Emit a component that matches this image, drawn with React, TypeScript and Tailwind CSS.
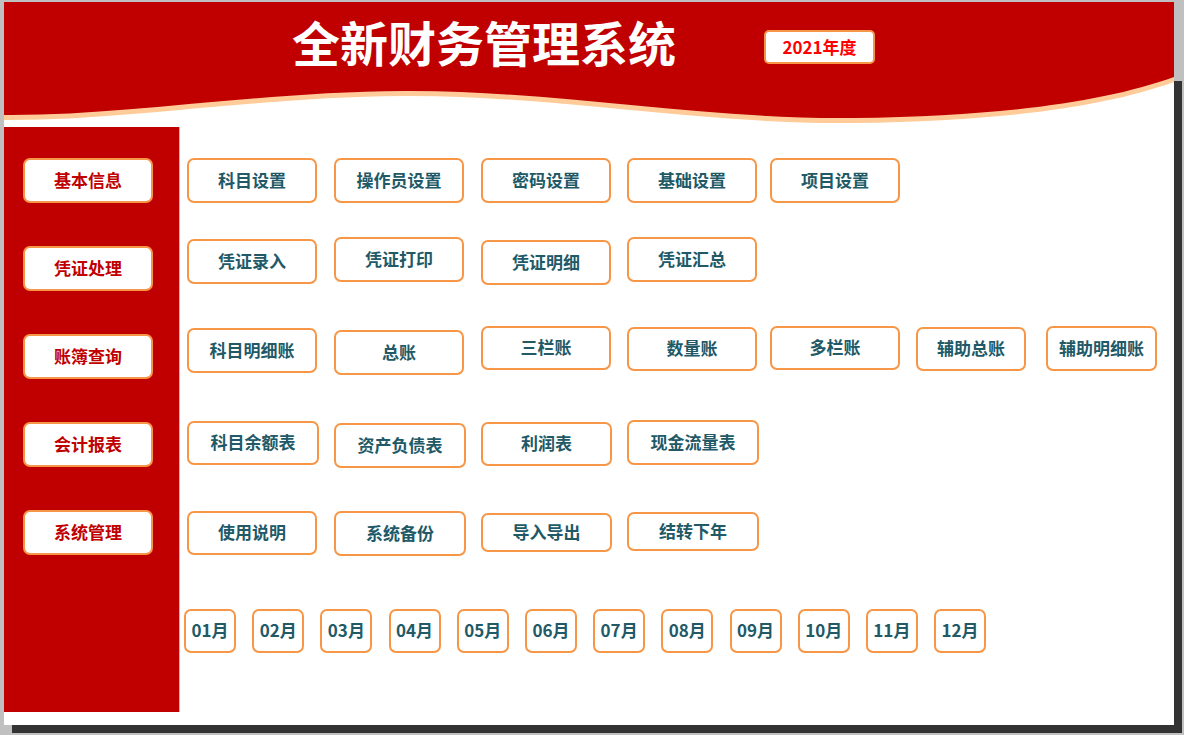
import React from "react";

type Btn = { t: string; c: string };

const rows: Btn[][] = [
  [
    { t: "科目设置", c: "w-[130px] h-[45px]" },
    { t: "操作员设置", c: "w-[130px] h-[45px]" },
    { t: "密码设置", c: "w-[130px] h-[45px]" },
    { t: "基础设置", c: "w-[130px] h-[45px]" },
    { t: "项目设置", c: "w-[130px] h-[45px]" },
  ],
  [
    { t: "凭证录入", c: "w-[130px] h-[45px] mt-[2px]" },
    { t: "凭证打印", c: "w-[130px] h-[45px]" },
    { t: "凭证明细", c: "w-[130px] h-[45px] mt-[3px]" },
    { t: "凭证汇总", c: "w-[130px] h-[45px]" },
  ],
  [
    { t: "科目明细账", c: "w-[130px] h-[45px] mt-[2px]" },
    { t: "总账", c: "w-[130px] h-[45px] mt-[4px]" },
    { t: "三栏账", c: "w-[130px] h-[44px]" },
    { t: "数量账", c: "w-[130px] h-[44px] mt-[1px]" },
    { t: "多栏账", c: "w-[130px] h-[44px]" },
    { t: "辅助总账", c: "w-[110px] h-[44px] mt-[1px]" },
    { t: "辅助明细账", c: "w-[111px] h-[45px]" },
  ],
  [
    { t: "科目余额表", c: "w-[132px] h-[44px] mt-[1px]" },
    { t: "资产负债表", c: "w-[132px] h-[45px] mt-[3px]" },
    { t: "利润表", c: "w-[131px] h-[44px] mt-[2px]" },
    { t: "现金流量表", c: "w-[132px] h-[45px]" },
  ],
  [
    { t: "使用说明", c: "w-[130px] h-[44px]" },
    { t: "系统备份", c: "w-[132px] h-[45px]" },
    { t: "导入导出", c: "w-[131px] h-[39px] mt-[2px]" },
    { t: "结转下年", c: "w-[132px] h-[39px] mt-[1px]" },
  ],
];

const rowHeights = ["h-[79px]", "h-[89px]", "h-[94px]", "h-[91px]", "h-[98px]"];

const side = ["基本信息", "凭证处理", "账簿查询", "会计报表", "系统管理"];

const months = ["01月", "02月", "03月", "04月", "05月", "06月", "07月", "08月", "09月", "10月", "11月", "12月"];

const font = "font-['Noto_Sans_CJK_SC',_'Noto_Sans',_sans-serif]";

function Wave() {
  return (
    <svg className="absolute inset-0" width="1170" height="125" viewBox="0 0 1170 125">
      <path d="M0 0 H1170 V80 C1100 105 1000 119 850 121 S550 93 400 94 S120 119 0 118 Z" fill="#ffcc99" />
      <path d="M0 0 H1170 V75 C1100 100 1000 114 850 116 S550 88 400 89 S120 114 0 113 Z" fill="#c00000" />
    </svg>
  );
}

export default function App() {
  return (
    <div className={`w-[1184px] h-[735px] bg-[#c0c0c0] pt-[2px] pl-[4px] overflow-hidden ${font}`}>
      <div className="flex">
        <div className="w-[1170px] h-[723px] shrink-0 bg-white flex flex-col overflow-hidden">
          {/* header */}
          <div className="relative h-[125px] shrink-0">
            <Wave />
            <div className="relative flex items-start pl-[288px] pt-[15px]">
              <h1 className="text-[48px] leading-[48px] font-bold text-white">全新财务管理系统</h1>
              <div className="ml-[88px] mt-[13px] w-[111px] h-[34px] bg-white border-2 border-[#f79646] rounded-[5px] flex items-center justify-center pb-[1px] text-[17px] font-bold text-[#ff0000]">
                2021年度
              </div>
            </div>
          </div>

          {/* body */}
          <div className="flex flex-1">
            <div className="w-[176px] h-[585px] shrink-0 bg-[#c00000] border-r border-[#ffc000] flex flex-col gap-[43px] pt-[31px] pl-[19px]">
              {side.map((s) => (
                <div
                  key={s}
                  className="w-[130px] h-[45px] bg-white border-[2.5px] border-[#f79646] rounded-[7px] flex items-center justify-center pb-[2px] text-[17px] font-bold text-[#c00000]"
                >
                  {s}
                </div>
              ))}
            </div>

            <div className="flex-1 flex flex-col pt-[31px]">
              {rows.map((r, i) => (
                <div
                  key={i}
                  className={`${rowHeights[i]} grid grid-cols-[147px_147px_146px_143px_146px_130px_130px] items-start pl-[7px]`}
                >
                  {r.map((b) => (
                    <div
                      key={b.t}
                      className={`${b.c} bg-white border-[2.5px] border-[#f79646] rounded-[7px] flex items-center justify-center pb-[2px] text-[17px] font-bold text-[#215967]`}
                    >
                      {b.t}
                    </div>
                  ))}
                </div>
              ))}
              <div className="flex gap-[16.2px] pl-[4px]">
                {months.map((m) => (
                  <div
                    key={m}
                    className="w-[52px] h-[44px] shrink-0 bg-white border-[2.5px] border-[#f79646] rounded-[7px] flex items-center justify-center pb-[2px] text-[17px] font-bold text-[#215967]"
                  >
                    {m}
                  </div>
                ))}
              </div>
            </div>
          </div>
        </div>
        <div className="w-[8px] pt-[79px] flex flex-col">
          <div className="flex-1 bg-[#333333]" />
        </div>
      </div>
      <div className="ml-[8px] w-[1170px] h-[8px] bg-[#333333]" />
    </div>
  );
}
